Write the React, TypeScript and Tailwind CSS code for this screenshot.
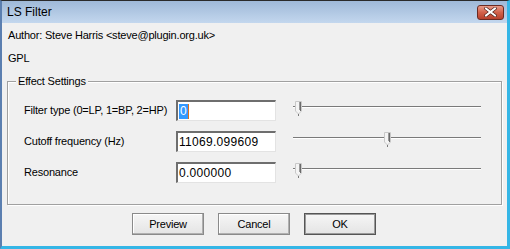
import React from "react";

const font = { fontFamily: '"Liberation Sans", Arial, sans-serif' };

function TextBox({ value, selected }: { value: string; selected?: boolean }) {
  return (
    <div className="w-[100px] h-[21px] bg-white border-t-2 border-l-2 border-t-[#6e6e6e] border-l-[#6e6e6e] border-b border-r border-b-[#e3e3e3] border-r-[#e3e3e3] flex items-center pl-[1px] text-[12px] tracking-[0.3px] leading-none text-black">
      {selected ? (
        <span className="flex items-center">
          <span className="bg-[#3399ff] text-white px-[1px] h-[15px] flex items-center">{value}</span>
          <span className="w-[1px] h-[15px] bg-[#e0701a]" />
        </span>
      ) : (
        <span>{value}</span>
      )}
    </div>
  );
}

function Slider({ pos }: { pos: number }) {
  return (
    <div className="relative w-[188px] h-[21px]">
      <div className="absolute left-0 right-0 top-[6px] h-[1px] bg-[#7a7a7a]" />
      <div className="absolute left-0 right-0 top-[7px] h-[1px] bg-[#ffffff]" />
      <div className="absolute top-[1px]" style={{ left: pos }}>
        <svg width="7" height="15" viewBox="0 0 7 15">
          <path d="M0.5 0.5 H6.5 V10 L3.5 13 L0.5 10 Z" fill="#f4f4f4" stroke="#c8c8c8" />
          <path d="M5.5 1 V10" stroke="#6a6a6a" />
          <path d="M4.5 1 V9" stroke="#9a9a9a" />
          <path d="M3.5 13 V15" stroke="#7a7a7a" />
        </svg>
      </div>
    </div>
  );
}

function Row({ label, value, pos, selected }: { label: string; value: string; pos: number; selected?: boolean }) {
  return (
    <div className="flex items-center h-[31px]">
      <div className="w-[168px] pl-[16px] whitespace-nowrap">{label}</div>
      <TextBox value={value} selected={selected} />
      <div className="ml-[17px]">
        <Slider pos={pos} />
      </div>
    </div>
  );
}

function Btn({ label, def }: { label: string; def?: boolean }) {
  return (
    <div
      className={
        "w-[72px] h-[22px] flex items-center justify-center bg-gradient-to-b from-[#f6f6f6] to-[#e4e4e4] border " +
        (def ? "border-[#555555] shadow-[inset_0_0_0_1px_#9a9a9a]" : "border-[#8a8a8a] shadow-[inset_-1px_-1px_0_#b0b0b0,inset_1px_1px_0_#ffffff]")
      }
    >
      {label}
    </div>
  );
}

export default function App() {
  return (
    <div className="w-[510px] h-[249px] overflow-hidden bg-[#f0f0f0] border-t border-t-[#2a2a2a] border-l-2 border-l-[#5b7fb0] border-r-[3px] border-r-[#35b6e6] border-b-[3px] border-b-[#35b6e6] flex flex-col" style={font}>
      {/* title bar */}
      <div className="h-[22px] shrink-0 bg-gradient-to-b from-[#9fb9d8] to-[#c3d7ee] flex items-center justify-between pl-[5px] pr-[3px]">
        <span className="text-[12px] text-black">LS Filter</span>
        <div className="w-[27px] h-[15px] rounded-[3px] border border-[#6a2a22] bg-gradient-to-b from-[#e79a88] via-[#d2614a] to-[#b8402c] flex items-center justify-center">
          <svg width="13" height="10" viewBox="0 0 13 10">
            <path d="M2 1.5 L11 8.5 M11 1.5 L2 8.5" stroke="#4a1a14" strokeWidth="3.4" strokeLinecap="square" />
            <path d="M2 1.5 L11 8.5 M11 1.5 L2 8.5" stroke="#ffffff" strokeWidth="2" strokeLinecap="square" />
          </svg>
        </div>
      </div>

      <div className="flex flex-col pl-[6px] pr-[3px] text-[11px] tracking-[-0.2px] text-black">
        <div className="h-[23px] flex items-center mt-[1px]">Author: Steve Harris &lt;steve@plugin.org.uk&gt;</div>
        <div className="h-[23px] flex items-center">GPL</div>

        {/* group box */}
        <div className="relative mt-[11px] ml-[-1px] w-[495px] h-[124px] border border-[#a0a0a0] shadow-[inset_1px_1px_0_#ffffff,1px_1px_0_#ffffff]">
          <div className="absolute left-[8px] top-[-8px] px-[2px] bg-[#f0f0f0] leading-[15px]">Effect Settings</div>
          <div className="flex flex-col pt-[13px]">
            <Row label="Filter type (0=LP, 1=BP, 2=HP)" value="0" pos={2} selected />
            <Row label="Cutoff frequency (Hz)" value="11069.099609" pos={91} />
            <Row label="Resonance" value="0.000000" pos={2} />
          </div>
        </div>

        <div className="flex gap-[14px] mt-[8px] ml-[124px]">
          <Btn label="Preview" />
          <Btn label="Cancel" />
          <Btn label="OK" def />
        </div>
      </div>
    </div>
  );
}
